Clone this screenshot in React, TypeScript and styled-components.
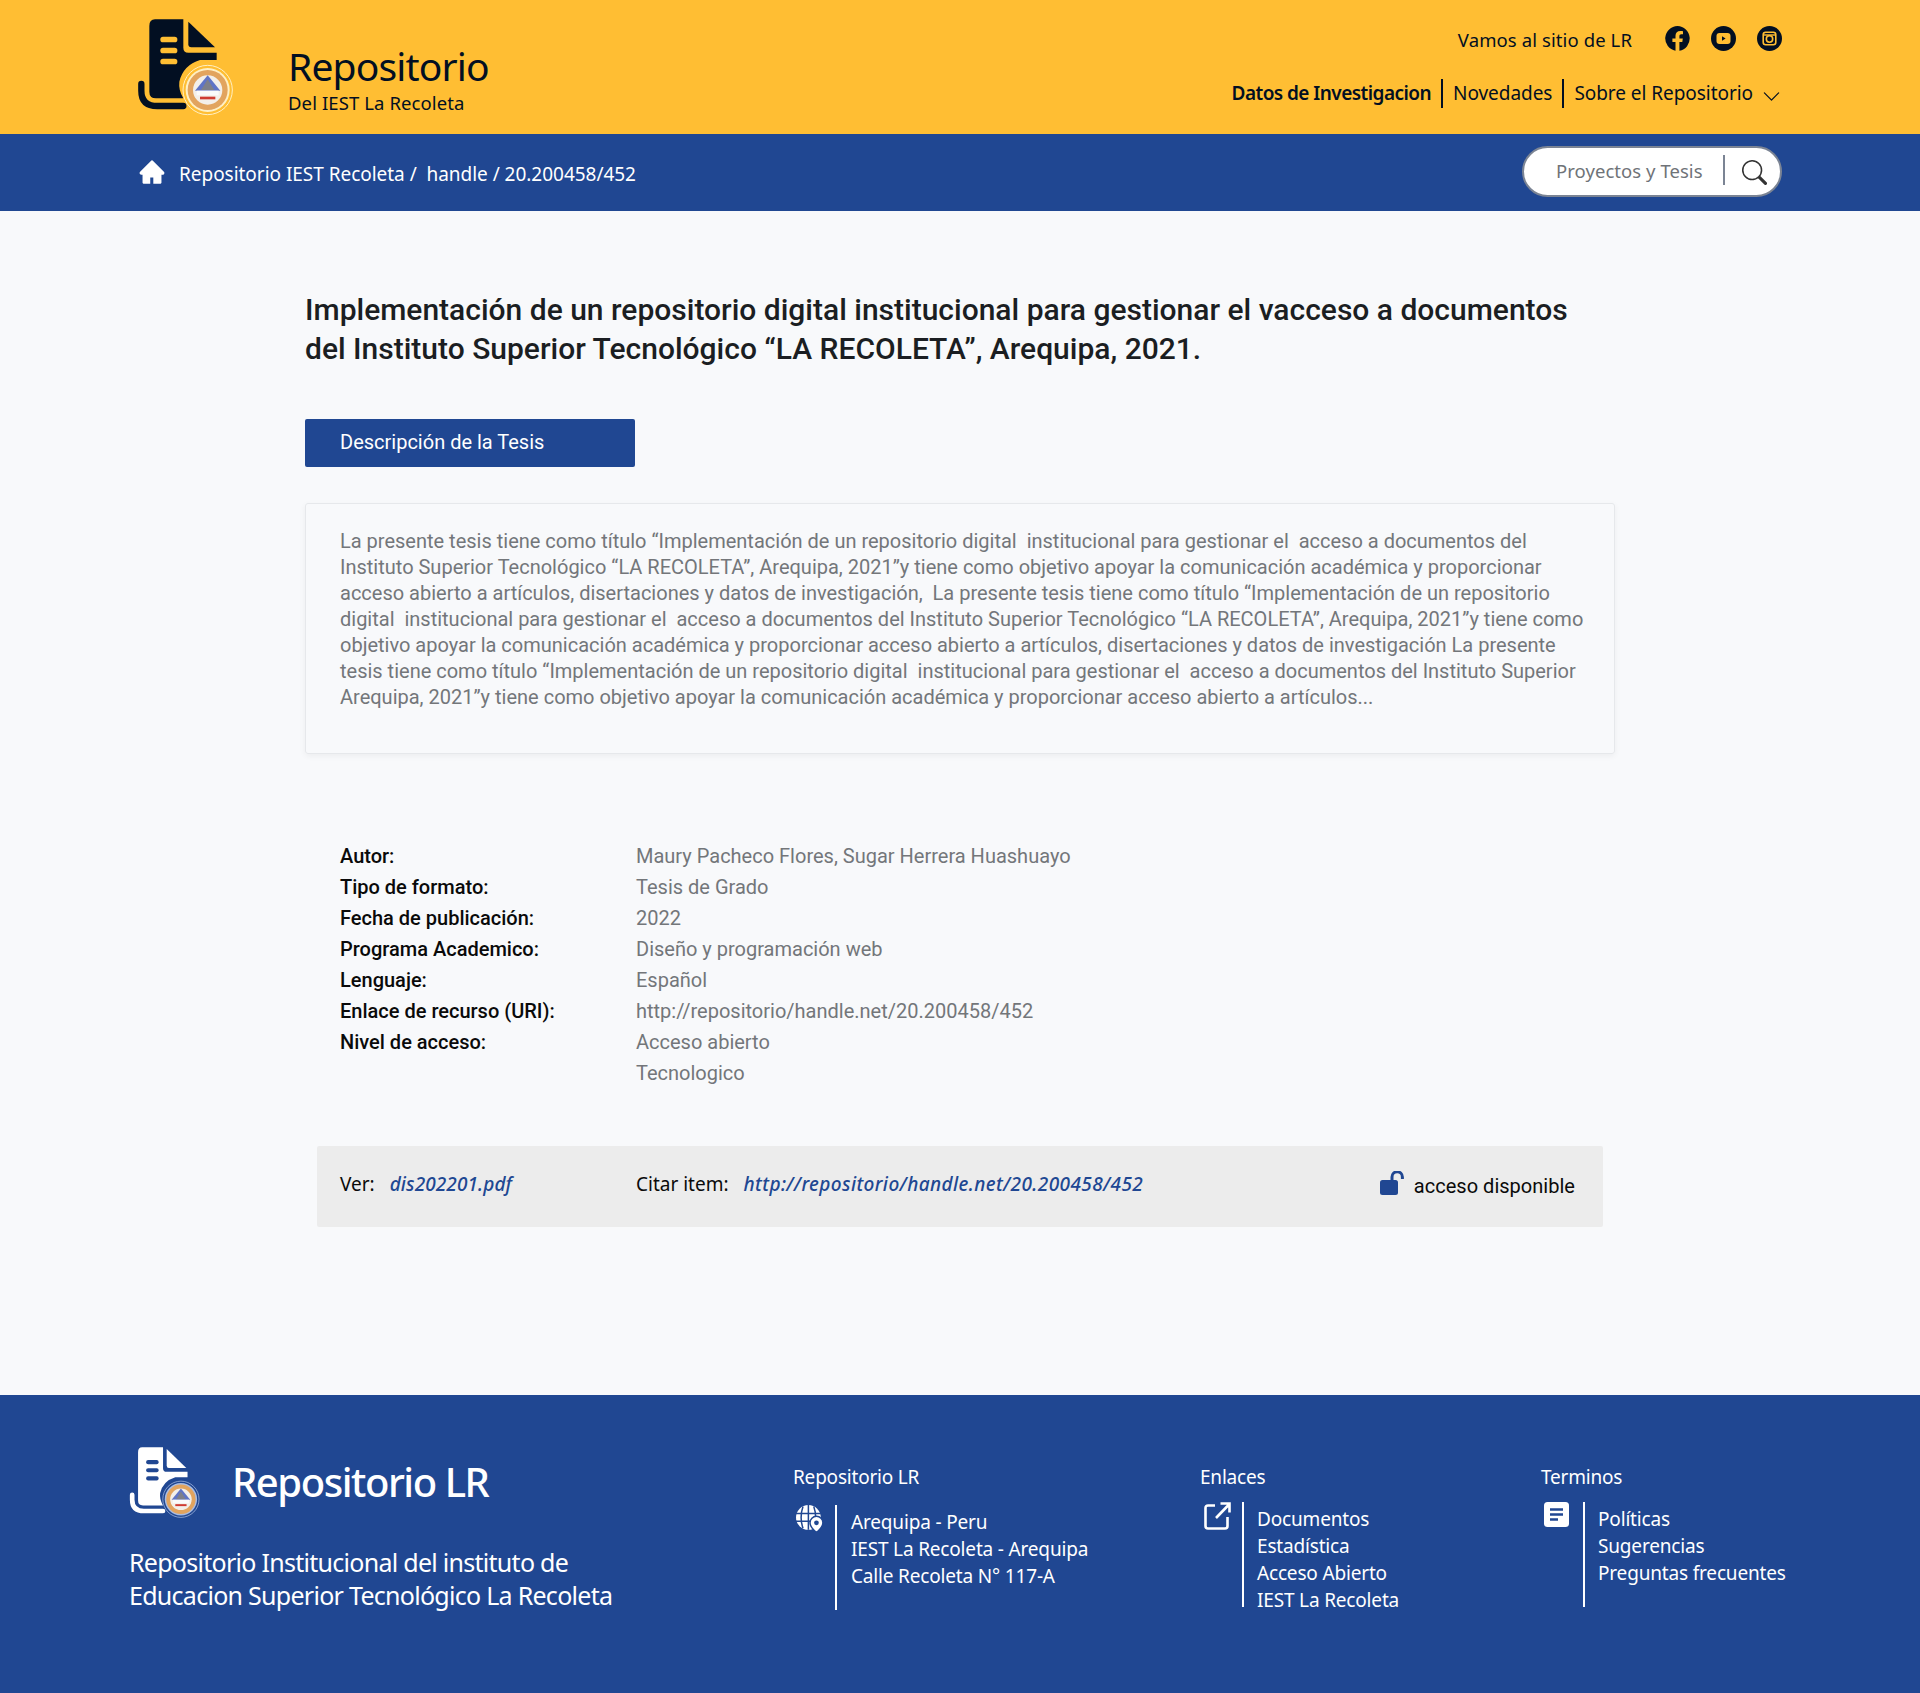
import React from 'react';
import styled, { createGlobalStyle } from 'styled-components';
import { BsChevronDown, BsSearch } from 'react-icons/bs';
import { AiFillHome } from 'react-icons/ai';

const GlobalStyle = createGlobalStyle`
  html, body {
    margin: 0;
    padding: 0;
    background: #f8f9fb;
    font-family: "Roboto", sans-serif;
  }
  * { box-sizing: border-box; }
`;

const UI = '"Noto Sans", "Open Sans", sans-serif';
const BLUE = '#204792';
const INK = '#020f22';
const AMBER = '#ffbe33';

const Page = styled.div`
  width: 1920px;
  height: 1693px;
  display: flex;
  flex-direction: column;
`;

const TopBar = styled.header`
  height: 134px;
  background: ${AMBER};
  padding: 15px 138px 0 137px;
  display: flex;
  justify-content: space-between;
  color: ${INK};
  font-family: ${UI};
`;

const Brand = styled.div`
  display: flex;
`;

const BrandText = styled.div`
  margin: 26px 0 0 53px;
`;

const BrandName = styled.div`
  font-size: 39px;
  line-height: 50px;
  letter-spacing: -0.85px;
`;

const BrandSub = styled.div`
  font-size: 18.5px;
  line-height: 24px;
  letter-spacing: 0.1px;
`;

const TopRight = styled.div`
  display: flex;
  flex-direction: column;
  align-items: flex-end;
`;

const SocialRow = styled.div`
  display: flex;
  align-items: center;
  height: 26px;
  margin-top: 10px;
`;

const SocialLabel = styled.span`
  font-size: 18.5px;
  letter-spacing: 0.1px;
  margin: 2px 33px 0 0;
`;

const SocialIcons = styled.div`
  display: flex;
  gap: 21px;
`;

const MainNav = styled.nav`
  display: flex;
  align-items: center;
  margin-top: 28px;
  font-size: 19px;
`;

const NavItem = styled.a<{ $active?: boolean; $divided?: boolean }>`
  height: 29px;
  line-height: 28px;
  font-weight: ${({ $active }) => ($active ? 600 : 400)};
  letter-spacing: ${({ $active }) => ($active ? '-0.55px' : '-0.05px')};
  padding-right: ${({ $divided }) => ($divided ? '10px' : '0')};
  margin-right: ${({ $divided }) => ($divided ? '10px' : '0')};
  border-right: ${({ $divided }) => ($divided ? `2px solid ${INK}` : '0')};
`;

const NavChevron = styled(BsChevronDown)`
  width: 19px;
  height: 19px;
  margin: 5px 1px 0 9px;
`;

const CrumbBar = styled.div`
  height: 77px;
  background: ${BLUE};
  padding: 0 138px 0 139px;
  display: flex;
  align-items: center;
  justify-content: space-between;
  color: #fff;
  font-family: ${UI};
`;

const Crumbs = styled.div`
  display: flex;
  align-items: center;
  font-size: 19px;
  letter-spacing: -0.03px;
  padding-top: 3px;
`;

const HomeIcon = styled(AiFillHome)`
  width: 28px;
  height: 28px;
  margin: -5px 13px 0 -1px;
`;

const SearchBox = styled.div`
  width: 260px;
  height: 51px;
  margin-top: -2px;
  background: #fff;
  border: 2px solid #7b8494;
  border-radius: 26px;
  display: flex;
  align-items: center;
  color: #6f7378;
  font-size: 18.5px;
  letter-spacing: 0.05px;
  padding: 0 0 3px 32px;
`;

const SearchDivider = styled.span`
  width: 2px;
  height: 30px;
  background: #7b8494;
  margin: 0 17px 0 20px;
`;

const SearchIcon = styled(BsSearch)`
  width: 25px;
  height: 25px;
  margin-top: 4px;
  color: #333;
`;

const Main = styled.main`
  flex: 1;
  padding: 0 305px;
`;

const Title = styled.h1`
  margin: 79px 0 0;
  font-size: 30px;
  line-height: 39px;
  font-weight: 500;
  color: #1b1e22;
`;

const TabLabel = styled.div`
  width: 330px;
  height: 48px;
  margin-top: 51px;
  padding-left: 35px;
  background: ${BLUE};
  border-radius: 2px;
  color: #fff;
  font-size: 20px;
  line-height: 47px;
`;

const DescriptionCard = styled.div`
  margin-top: 36px;
  height: 251px;
  padding: 24px 20px 0 34px;
  border: 1px solid #e6e8eb;
  border-radius: 3px;
  box-shadow: 0 2px 6px rgba(0, 0, 0, 0.05);
  color: #73767a;
  font-size: 20px;
  line-height: 26px;
  white-space: pre-wrap;
`;

const MetaGrid = styled.dl`
  margin: 87px 0 0 35px;
  display: grid;
  grid-template-columns: 296px 1fr;
  grid-auto-rows: 31px;
  font-size: 20px;
  line-height: 31px;
`;

const MetaLabel = styled.dt`
  color: #0a0a0a;
  font-weight: 500;
`;

const MetaValue = styled.dd`
  margin: 0;
  color: #73767a;
`;

const AccessBar = styled.div`
  margin: 57px 12px 0;
  height: 81px;
  background: #ececec;
  border-radius: 2px;
  padding: 0 28px 0 23px;
  display: flex;
  align-items: center;
  font-family: ${UI};
  color: #0a0a0a;
  font-size: 19px;
`;

const BarCell = styled.div<{ $width?: number; $right?: boolean }>`
  display: flex;
  align-items: center;
  margin-top: -6px;
  width: ${({ $width }) => ($width ? `${$width}px` : 'auto')};
  margin-left: ${({ $right }) => ($right ? 'auto' : '0')};
`;

const BarLink = styled.a<{ $spacing: number }>`
  margin-left: 15px;
  color: ${BLUE};
  font-style: italic;
  font-weight: 500;
  letter-spacing: ${({ $spacing }) => $spacing}px;
`;

const AccessText = styled.span`
  font-family: "Roboto", sans-serif;
  font-size: 20px;
  margin: 5px 0 0 8px;
  letter-spacing: 0.02px;
`;

const Footer = styled.footer`
  height: 298px;
  background: ${BLUE};
  color: #fff;
  font-family: ${UI};
  padding: 49px 0 0 129px;
  display: flex;
`;

const FooterBrand = styled.div`
  width: 664px;
`;

const FooterLogoRow = styled.div`
  display: flex;
  align-items: center;
`;

const FooterName = styled.div`
  font-size: 40px;
  line-height: 50px;
  letter-spacing: -1.45px;
  font-weight: 500;
  margin: 0 0 0 31px;
`;

const FooterBlurb = styled.p`
  margin: 26px 0 0;
  font-size: 25px;
  line-height: 33px;
  letter-spacing: -0.72px;
`;

const FooterColumn = styled.div<{ $width: number }>`
  width: ${({ $width }) => $width}px;
`;

const FooterHeading = styled.div`
  font-size: 19px;
  line-height: 26px;
  letter-spacing: -0.2px;
  margin-top: 20px;
`;

const FooterBody = styled.div<{ $offset: number }>`
  display: grid;
  grid-template-columns: 42px 1fr;
  margin-top: ${({ $offset }) => $offset}px;
`;

const FooterIcon = styled.div<{ $inset: number }>`
  padding: 0 0 0 ${({ $inset }) => $inset}px;
  line-height: 0;
`;

const FooterList = styled.ul<{ $indent?: number }>`
  margin: 0;
  padding: 4px 0 0 ${({ $indent }) => $indent ?? 13}px;
  height: 105px;
  border-left: 2px solid #fff;
  list-style: none;
  font-size: 19px;
  line-height: 27px;
  letter-spacing: -0.17px;
  white-space: nowrap;
`;

const DocLogo = ({ w, h, fill, notch, ring }: { w: number; h: number; fill: string; notch: string; ring: string }) => (
  <svg width={w} height={h} viewBox="51 45 294 309" style={{ flexShrink: 0 }}>
    <path d="M105 58H190V143Q190 158 205 158H290V180H240Q190 195 178 245Q175 270 190 295H108Q88 295 88 275V78Q88 58 105 58Z" fill={fill} />
    <path d="M205 65L285 142H214Q205 142 205 133Z" fill={fill} />
    <rect x="121" y="110" width="51" height="17" rx="8" fill={notch} />
    <rect x="121" y="143" width="51" height="17" rx="8" fill={notch} />
    <rect x="121" y="176" width="51" height="17" rx="8" fill={notch} />
    <path d="M64 252V272Q64 318 112 318H190" fill="none" stroke={fill} strokeWidth="19" strokeLinecap="round" />
    <circle cx="263" cy="270" r="77" fill={notch} />
    <circle cx="263" cy="270" r="74" fill="none" stroke={ring} strokeWidth="3" />
    <circle cx="263" cy="270" r="66" fill={ring} />
    <circle cx="263" cy="270" r="60" fill="#e2a45e" />
    <circle cx="263" cy="270" r="44" fill="#f3efe9" />
    <path d="M225 272L263 226L301 272Z" fill="#5f74c6" />
    <path d="M243 270L263 238L283 270Z" fill="#7d7f8a" />
    <rect x="230" y="272" width="66" height="14" fill="#fafafa" />
    <rect x="240" y="290" width="46" height="8" fill="#cf3b32" />
  </svg>
);

const FacebookIcon = () => (
  <svg width="25" height="25" viewBox="0 0 25 25">
    <path fill={INK} d="M12.5 0a12.5 12.5 0 0 0-2 24.8v-8.7H7.4v-3.6h3.1V9.8c0-3.1 1.9-4.8 4.7-4.8 1.3 0 2.8.2 2.8.2v3h-1.6c-1.5 0-2 1-2 1.9v2.4h3.4l-.5 3.6h-2.9v8.7A12.5 12.5 0 0 0 12.5 0Z" />
  </svg>
);

const YoutubeIcon = () => (
  <svg width="25" height="25" viewBox="0 0 25 25">
    <circle cx="12.5" cy="12.5" r="12.5" fill={INK} />
    <rect x="5.5" y="7" width="14" height="11" rx="3" fill={AMBER} />
    <path d="M11 10.3l3.6 2.2-3.6 2.2Z" fill={INK} />
  </svg>
);

const InstagramIcon = () => (
  <svg width="25" height="25" viewBox="0 0 25 25">
    <circle cx="12.5" cy="12.5" r="12.5" fill={INK} />
    <rect x="6.2" y="6.2" width="12.6" height="12.6" rx="2.5" fill="none" stroke={AMBER} strokeWidth="1.6" />
    <circle cx="12.5" cy="13" r="3.2" fill="none" stroke={AMBER} strokeWidth="1.6" />
    <path d="M6.5 9h12" stroke={AMBER} strokeWidth="1.4" />
  </svg>
);

const LockIcon = () => (
  <svg width="26" height="25" viewBox="0 0 26 25">
    <rect x="0" y="9" width="18" height="15" rx="2.5" fill={BLUE} />
    <path d="M12 9V6a5.2 5.2 0 0 1 10.4 0v2" fill="none" stroke={BLUE} strokeWidth="3" />
  </svg>
);

const GlobePinIcon = () => (
  <svg width="28" height="28" viewBox="0 0 26 26">
    <circle cx="11.5" cy="11.5" r="11.5" fill="#fff" />
    <path d="M0 8h23M0 15h23M11.5 0v23M6.5 1.5Q3 11.5 6.5 21.5M16.5 1.5Q20 11.5 16.5 21.5" stroke={BLUE} strokeWidth="1.4" fill="none" />
    <path d="M19 10.5a6 6 0 0 1 6 6c0 4-6 9-6 9s-6-5-6-9a6 6 0 0 1 6-6Z" fill="#fff" stroke={BLUE} strokeWidth="1.4" />
    <circle cx="19" cy="16.5" r="2.2" fill={BLUE} />
  </svg>
);

const ExternalIcon = () => (
  <svg width="27" height="28" viewBox="0 0 27 28" fill="none" stroke="#fff" strokeWidth="2.6">
    <path d="M11 3.5H4Q1.5 3.5 1.5 6v18Q1.5 26.5 4 26.5h17q2.5 0 2.5-2.5v-9" />
    <path d="M12 16L25 2.5M16.5 1.5H25.5V10.5" />
  </svg>
);

const PageIcon = () => (
  <svg width="25" height="25" viewBox="0 0 25 25">
    <rect width="25" height="25" rx="3.5" fill="#fff" />
    <path d="M6 7.5h13M6 12.5h13M6 17.5h8" stroke={BLUE} strokeWidth="2.4" />
  </svg>
);

const DESCRIPTION = `La presente tesis tiene como título “Implementación de un repositorio digital  institucional para gestionar el  acceso a documentos del Instituto Superior Tecnológico “LA RECOLETA”, Arequipa, 2021”y tiene como objetivo apoyar la comunicación académica y proporcionar acceso abierto a artículos, disertaciones y datos de investigación,  La presente tesis tiene como título “Implementación de un repositorio digital  institucional para gestionar el  acceso a documentos del Instituto Superior Tecnológico “LA RECOLETA”, Arequipa, 2021”y tiene como objetivo apoyar la comunicación académica y proporcionar acceso abierto a artículos, disertaciones y datos de investigación La presente tesis tiene como título “Implementación de un repositorio digital  institucional para gestionar el  acceso a documentos del Instituto Superior Arequipa, 2021”y tiene como objetivo apoyar la comunicación académica y proporcionar acceso abierto a artículos...`;

const metadata = [
  ['Autor:', 'Maury Pacheco Flores, Sugar Herrera Huashuayo'],
  ['Tipo de formato:', 'Tesis de Grado'],
  ['Fecha de publicación:', '2022'],
  ['Programa Academico:', 'Diseño y programación web'],
  ['Lenguaje:', 'Español'],
  ['Enlace de recurso (URI):', 'http://repositorio/handle.net/20.200458/452'],
  ['Nivel de acceso:', 'Acceso abierto'],
  ['', 'Tecnologico'],
];

const App: React.FC = () => (
  <Page>
    <GlobalStyle />
    <TopBar>
      <Brand>
        <DocLogo w={98} h={103} fill={INK} notch={AMBER} ring="#fff0c4" />
        <BrandText>
          <BrandName>Repositorio</BrandName>
          <BrandSub>Del IEST La Recoleta</BrandSub>
        </BrandText>
      </Brand>
      <TopRight>
        <SocialRow>
          <SocialLabel>Vamos al sitio de LR</SocialLabel>
          <SocialIcons>
            <FacebookIcon />
            <YoutubeIcon />
            <InstagramIcon />
          </SocialIcons>
        </SocialRow>
        <MainNav>
          <NavItem $active $divided>Datos de Investigacion</NavItem>
          <NavItem $divided>Novedades</NavItem>
          <NavItem>Sobre el Repositorio</NavItem>
          <NavChevron />
        </MainNav>
      </TopRight>
    </TopBar>
    <CrumbBar>
      <Crumbs>
        <HomeIcon />
        Repositorio IEST Recoleta /&nbsp; handle / 20.200458/452
      </Crumbs>
      <SearchBox>
        Proyectos y Tesis
        <SearchDivider />
        <SearchIcon />
      </SearchBox>
    </CrumbBar>
    <Main>
      <Title>
        Implementación de un repositorio digital institucional para gestionar el vacceso a documentos
        <br />
        del Instituto Superior Tecnológico “LA RECOLETA”, Arequipa, 2021.
      </Title>
      <TabLabel>Descripción de la Tesis</TabLabel>
      <DescriptionCard>{DESCRIPTION}</DescriptionCard>
      <MetaGrid>
        {metadata.map(([label, value]) => (
          <React.Fragment key={value}>
            <MetaLabel>{label}</MetaLabel>
            <MetaValue>{value}</MetaValue>
          </React.Fragment>
        ))}
      </MetaGrid>
      <AccessBar>
        <BarCell $width={296}>
          Ver:<BarLink $spacing={0.1}>dis202201.pdf</BarLink>
        </BarCell>
        <BarCell>
          Citar item:<BarLink $spacing={0.4}>http://repositorio/handle.net/20.200458/452</BarLink>
        </BarCell>
        <BarCell $right>
          <LockIcon />
          <AccessText>acceso disponible</AccessText>
        </BarCell>
      </AccessBar>
    </Main>
    <Footer>
      <FooterBrand>
        <FooterLogoRow>
          <DocLogo w={72} h={76} fill="#fff" notch={BLUE} ring="#a9bce2" />
          <FooterName>Repositorio LR</FooterName>
        </FooterLogoRow>
        <FooterBlurb>
          Repositorio Institucional del instituto de
          <br />
          Educacion Superior Tecnológico La Recoleta
        </FooterBlurb>
      </FooterBrand>
      <FooterColumn $width={407}>
        <FooterHeading>Repositorio LR</FooterHeading>
        <FooterBody $offset={15}>
          <FooterIcon $inset={3}><GlobePinIcon /></FooterIcon>
          <FooterList $indent={14}>
            <li>Arequipa - Peru</li>
            <li>IEST La Recoleta - Arequipa</li>
            <li>Calle Recoleta N° 117-A</li>
          </FooterList>
        </FooterBody>
      </FooterColumn>
      <FooterColumn $width={341}>
        <FooterHeading>Enlaces</FooterHeading>
        <FooterBody $offset={12}>
          <FooterIcon $inset={4}><ExternalIcon /></FooterIcon>
          <FooterList>
            <li>Documentos</li>
            <li>Estadística</li>
            <li>Acceso Abierto</li>
            <li>IEST La Recoleta</li>
          </FooterList>
        </FooterBody>
      </FooterColumn>
      <FooterColumn $width={240}>
        <FooterHeading>Terminos</FooterHeading>
        <FooterBody $offset={12}>
          <FooterIcon $inset={3}><PageIcon /></FooterIcon>
          <FooterList>
            <li>Políticas</li>
            <li>Sugerencias</li>
            <li>Preguntas frecuentes</li>
          </FooterList>
        </FooterBody>
      </FooterColumn>
    </Footer>
  </Page>
);

export default App;
